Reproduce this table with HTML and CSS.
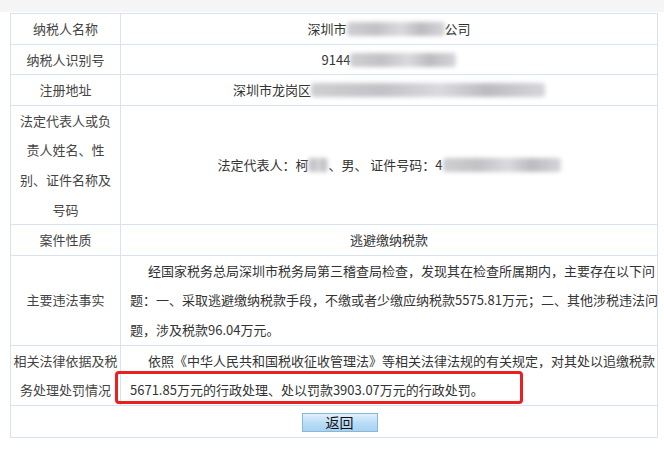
FILE: index.html
```html
<!DOCTYPE html>
<html lang="zh-CN">
<head>
<meta charset="utf-8">
<link rel="stylesheet" href="styles.css">
</head>
<body>
<div class="topband"></div>
<div class="wrap">
  <table class="info">
    <colgroup><col class="c-label"><col class="c-value"></colgroup>
    <tr>
      <td class="label">纳税人名称</td>
      <td class="value center">深圳市<span class="blur" style="width:98px"></span>公司</td>
    </tr>
    <tr>
      <td class="label">纳税人识别号</td>
      <td class="value center">9144<span class="blur" style="width:106px"></span></td>
    </tr>
    <tr>
      <td class="label">注册地址</td>
      <td class="value center">深圳市龙岗区<span class="blur" style="width:234px"></span></td>
    </tr>
    <tr>
      <td class="label">法定代表人或负<br>责人姓名、性<br>别、证件名称及<br>号码</td>
      <td class="value center">法定代表人：柯<span class="blur" style="width:20px"></span>、男、 证件号码：4<span class="blur" style="width:118px"></span></td>
    </tr>
    <tr>
      <td class="label">案件性质</td>
      <td class="value center">逃避缴纳税款</td>
    </tr>
    <tr>
      <td class="label">主要违法事实</td>
      <td class="value para">经国家税务总局深圳市税务局第三稽查局检查，发现其在检查所属期内，主要存在以下问<br>题：一、采取逃避缴纳税款手段，不缴或者少缴应纳税款5575.81万元；二、其他涉税违法问<br>题，涉及税款96.04万元。</td>
    </tr>
    <tr>
      <td class="label">相关法律依据及税<br>务处理处罚情况</td>
      <td class="value para">依照《中华人民共和国税收征收管理法》等相关法律法规的有关规定，对其处以追缴税款<br>5671.85万元的行政处理、处以罚款3903.07万元的行政处罚。</td>
    </tr>
    <tr>
      <td class="actions" colspan="2"><button class="btn" type="button">返回</button></td>
    </tr>
  </table>
  <div class="mark"></div>
</div>
</body>
</html>
```
FILE: styles.css
```css
html, body {
  margin: 0;
  padding: 0;
  background: #ffffff;
}
body {
  font-family: "Microsoft YaHei", "Noto Sans CJK SC", "Noto Sans", sans-serif;
  font-size: 13px;
  color: #333333;
}
.topband {
  height: 12px;
  background: #f5f5f5;
}
.wrap {
  position: relative;
  padding: 1px 6px 0 10px;
}
.info {
  width: 648px;
  border-collapse: collapse;
  border: 1px solid #d9e3ee;
  table-layout: fixed;
}
.c-label { width: 110px; }
.info td {
  border: 1px solid #d9e3ee;
  padding: 0;
  line-height: 29.6px;
  vertical-align: middle;
}
.label {
  text-align: center;
  color: #444;
}
.center { text-align: center; }
.para {
  text-align: left;
  text-indent: 18px;
  white-space: nowrap;
  padding: 0 0 0 9px !important;
}
.blur {
  display: inline-block;
  height: 14px;
  vertical-align: -2px;
  background: linear-gradient(90deg, #cfcfd2, #c2c2c6 30%, #dadade 55%, #bcbcc0 75%, #d6d6da);
  filter: blur(2px);
  border-radius: 3px;
}
.actions {
  text-align: center;
  height: 31px;
  padding: 0;
}
.btn {
  width: 76px;
  height: 19px;
  margin: 0 0 0 11px;
  padding: 0;
  border: 1px solid #8ab6d9;
  background: linear-gradient(#dff0fc, #b7dcf6 55%, #a8d2f1);
  font-family: "Microsoft YaHei", "Noto Sans CJK SC", sans-serif;
  font-size: 14px;
  line-height: 17px;
  color: #111;
  vertical-align: middle;
}
.mark {
  position: absolute;
  left: 115px;
  top: 359px;
  width: 402px;
  height: 27px;
  border: 3px solid #e8201f;
  border-radius: 4px;
  pointer-events: none;
}
```
